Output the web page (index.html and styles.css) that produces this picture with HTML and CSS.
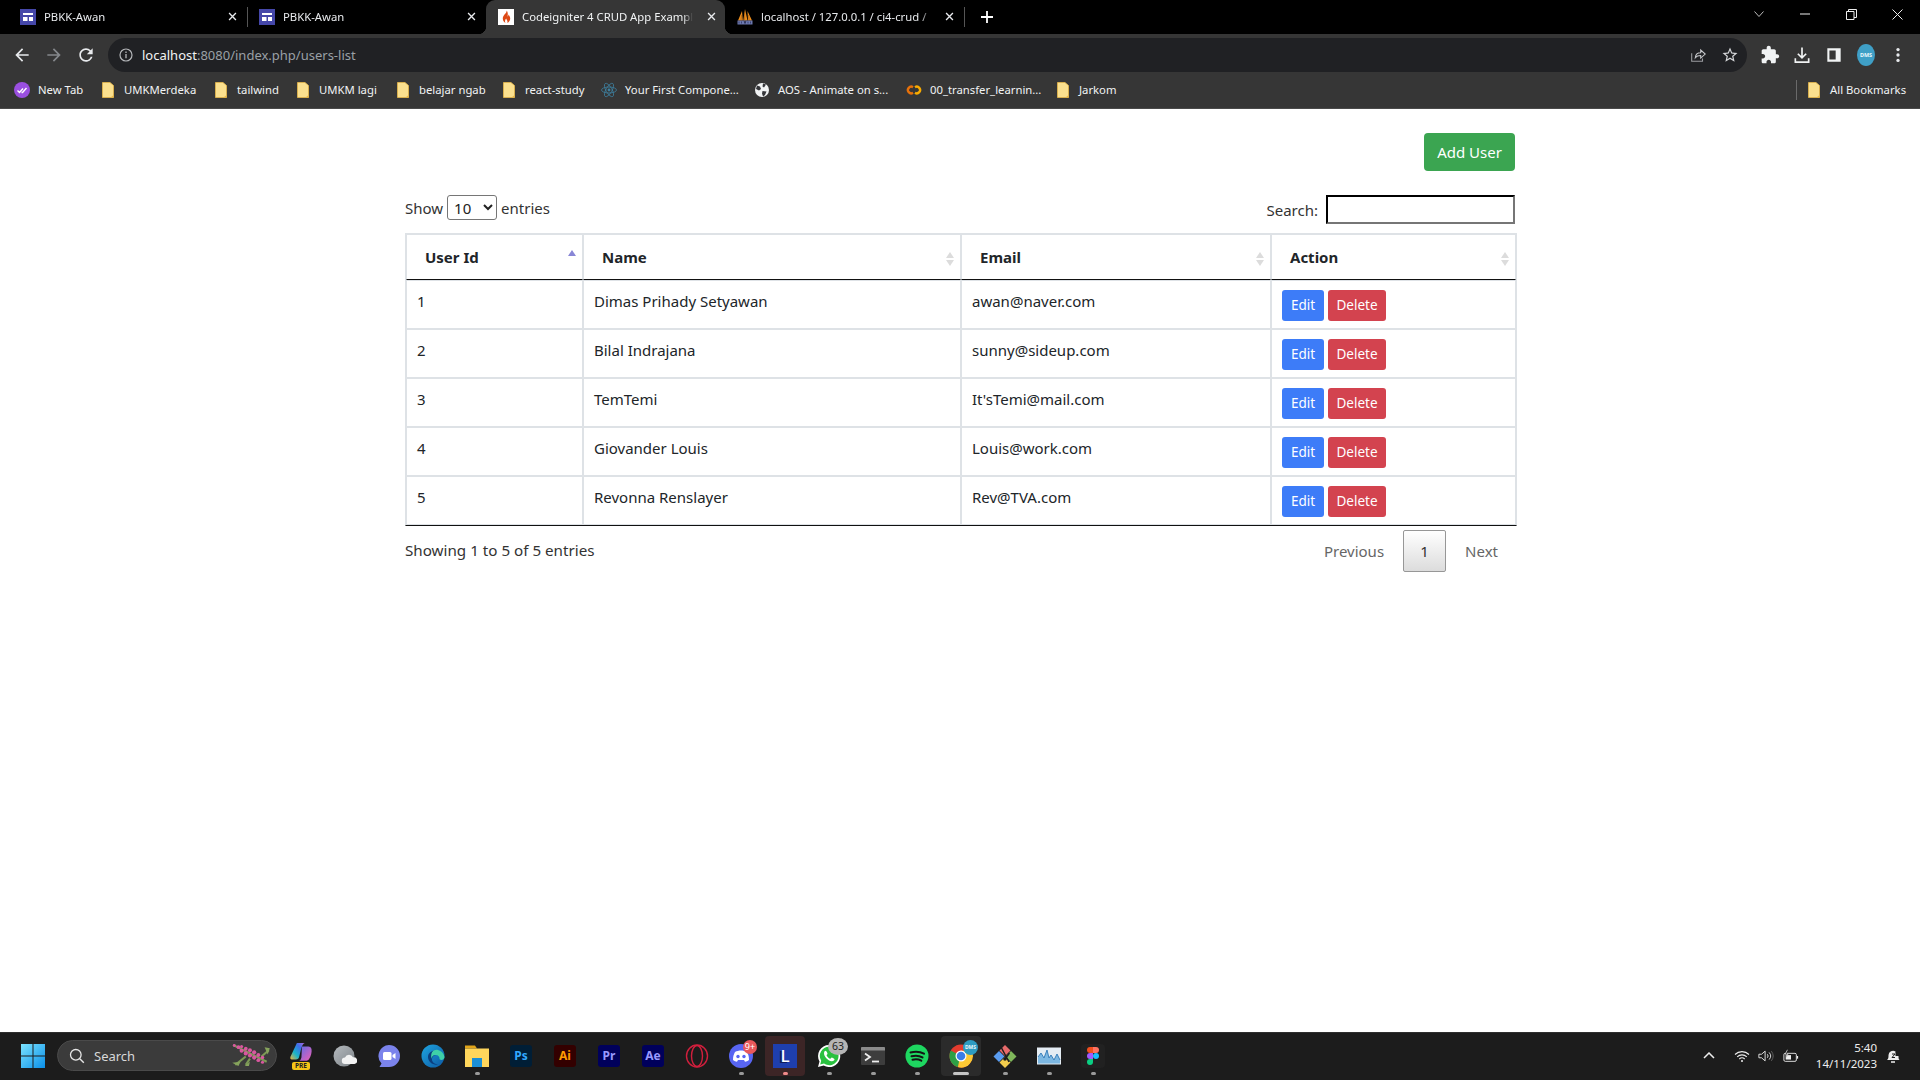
FILE: index.html
```html
<!DOCTYPE html>
<html lang="en">
<head>
<meta charset="UTF-8">
<meta name="viewport" content="width=device-width, initial-scale=1.0">
<title>Codeigniter 4 CRUD App Example</title>
<link rel="stylesheet" href="styles.css">
</head>
<body>

<svg class="defs" width="0" height="0" aria-hidden="true">
  <symbol id="i-close" viewBox="0 0 10 10"><path d="M1.2 1.2l7.6 7.6M8.8 1.2L1.2 8.8" fill="none" stroke="currentColor" stroke-width="1.5"/></symbol>
  <symbol id="i-folder" viewBox="0 0 12 16"><path d="M0.5 0.5h7.5l3.5 3v12H0.5z" fill="#fbe08e" stroke="#e9b949" stroke-width="0.8"/><path d="M8.5 15.5h3v-2.5z" fill="#e9b949"/></symbol>
  <symbol id="i-page" viewBox="0 0 16 16"><rect width="16" height="16" fill="#4547a9"/><path d="M3 4h10v2H3zM3 8h4.5v4H3zM9 8h4v4H9z" fill="#fff"/></symbol>
</svg>

<header class="browser">
  <div class="tabstrip">
    <div class="tab">
      <svg class="fav"><use href="#i-page"/></svg>
      <span class="tab-title">PBKK-Awan</span>
      <svg class="tab-x"><use href="#i-close"/></svg>
    </div>
    <div class="tab tab-sep">
      <svg class="fav"><use href="#i-page"/></svg>
      <span class="tab-title">PBKK-Awan</span>
      <svg class="tab-x"><use href="#i-close"/></svg>
    </div>
    <div class="tab tab-active">
      <svg class="fav" viewBox="0 0 16 16"><rect width="16" height="16" fill="#fff"/><path d="M8.6 1.5c.6 2.600-3.800 4.400-3.800 8 0 2 1.200 3.600 2.800 4.500-.9-1.400-.9-2.700.6-4.400.2 1.400 1.900 2.200 1.100 4.400 1.700-.8 2.900-2.400 2.900-4.400 0-1.900-1-3.100-1.800-4 .1 1-.3 1.700-.9 2C10 5.500 10 3 8.600 1.500z" fill="#dd4814"/></svg>
      <span class="tab-title">Codeigniter 4 CRUD App Exampl</span>
      <svg class="tab-x"><use href="#i-close"/></svg>
    </div>
    <div class="tab">
      <svg class="fav" viewBox="0 0 16 16"><path d="M1 11.500L5 2l.8 9.500zM6.300 11.500L8 0l2.500 11.500zM11 11.500L10.500 2 15 11.500z" fill="#ec8d1c"/><path d="M7.800 3L7.500 11M4.600 6l-.6 5M11.500 6l.6 5" stroke="#8a4f12" stroke-width="0.500"/><rect x="0.500" y="11.500" width="15" height="4" fill="#6c78af"/><path d="M2 12.500v2M4.500 12.500v2M7 12.500l1 2 1-2M11 12.500v2M13.500 12.500v2" stroke="#2e3560" stroke-width="0.800"/></svg>
      <span class="tab-title">localhost / 127.0.0.1 / ci4-crud /</span>
      <svg class="tab-x"><use href="#i-close"/></svg>
    </div>
    <span class="tab-end"></span>
    <svg class="tab-new" viewBox="0 0 12 12"><path d="M6 0v12M0 6h12" stroke="#fff" stroke-width="1.800"/></svg>
    <div class="win-btns">
      <span class="win-btn"><svg width="10" height="6" viewBox="0 0 10 6"><path d="M.5.5L5 5.500 9.500.5" fill="none" stroke="#bbb"/></svg></span>
      <span class="win-btn"><svg width="10" height="2" viewBox="0 0 10 2"><path d="M0 1h10" stroke="#eee"/></svg></span>
      <span class="win-btn"><svg width="11" height="11" viewBox="0 0 11 11"><path d="M.5 2.500h7.500v8H.5zM2.500 2.500V.5h8v8H8" fill="none" stroke="#eee"/></svg></span>
      <span class="win-btn"><svg width="11" height="11" viewBox="0 0 11 11"><path d="M.5.5l10 10M10.500.5l-10 10" stroke="#eee"/></svg></span>
    </div>
  </div>

  <div class="toolbar">
    <span class="tool"><svg viewBox="0 0 24 24"><path d="M20 11H7.800l5.600-5.600L12 4l-8 8 8 8 1.400-1.400L7.800 13H20z" fill="#e8eaed"/></svg></span>
    <span class="tool"><svg viewBox="0 0 24 24"><path d="M4 11h12.200l-5.600-5.600L12 4l8 8-8 8-1.400-1.400 5.600-5.600H4z" fill="#85888c"/></svg></span>
    <span class="tool"><svg viewBox="0 0 24 24"><path d="M17.650 6.350A7.958 7.958 0 0 0 12 4c-4.420 0-7.990 3.580-7.990 8s3.570 8 7.990 8c3.730 0 6.840-2.550 7.730-6h-2.080A5.990 5.990 0 0 1 12 18c-3.310 0-6-2.690-6-6s2.690-6 6-6c1.660 0 3.140.69 4.220 1.780L13 11h7V4l-2.350 2.350z" fill="#e8eaed"/></svg></span>
    <div class="omnibox">
      <svg class="omni-info" viewBox="0 0 14 14"><circle cx="7" cy="7" r="6" fill="none" stroke="#b5b7ba" stroke-width="1.200"/><path d="M7 6v4.200M7 3.500v1.400" stroke="#b5b7ba" stroke-width="1.300"/></svg>
      <span class="url"><b>localhost</b>:8080/index.php/users-list</span>
      <svg class="omni-act" viewBox="0 0 20 20"><path d="M3 8v9h12v-3" fill="none" stroke="#9a9ca0" stroke-width="1.200"/><path d="M7 13c.3-3.500 3-5.500 6-5.500V4.500l5 4.500-5 4.500v-3c-2.500 0-4.700.8-6 2.500z" fill="none" stroke="#c5c7ca" stroke-width="1.200"/></svg>
      <svg class="omni-act" viewBox="0 0 24 24"><path d="M22 9.240l-7.190-.62L12 2 9.190 8.630 2 9.240l5.460 4.730L5.820 21 12 17.270 18.180 21l-1.630-7.030L22 9.240zM12 15.400l-3.760 2.270 1-4.280-3.320-2.880 4.380-.38L12 6.100l1.710 4.040 4.380.38-3.320 2.880 1 4.280L12 15.400z" fill="#d5d7da"/></svg>
    </div>
    <span class="tool"><svg viewBox="0 0 24 24"><path d="M20.500 11H19V7c0-1.100-.9-2-2-2h-4V3.500C13 2.120 11.880 1 10.500 1S8 2.120 8 3.500V5H4c-1.100 0-1.990.9-1.990 2v3.800H3.500c1.490 0 2.700 1.210 2.700 2.700s-1.210 2.700-2.700 2.700H2V20c0 1.100.9 2 2 2h3.800v-1.500c0-1.490 1.210-2.700 2.700-2.700 1.490 0 2.700 1.210 2.700 2.700V22H17c1.100 0 2-.9 2-2v-4h1.500c1.380 0 2.500-1.120 2.500-2.500S21.880 11 20.500 11z" fill="#f1f3f4"/></svg></span>
    <span class="tool"><svg viewBox="0 0 24 24"><path d="M12 3v12M7 10.500l5 5 5-5M4 16v4.500h16V16" fill="none" stroke="#f1f3f4" stroke-width="2"/></svg></span>
    <span class="tool"><svg viewBox="0 0 24 24"><path d="M4 4h16v16H4zM6.500 6.500v11H14v-11z" fill="#f1f3f4" fill-rule="evenodd"/></svg></span>
    <span class="tool"><span class="avatar">DMS</span></span>
    <span class="tool"><svg viewBox="0 0 24 24"><circle cx="12" cy="5.500" r="2" fill="#e8eaed"/><circle cx="12" cy="12" r="2" fill="#e8eaed"/><circle cx="12" cy="18.500" r="2" fill="#e8eaed"/></svg></span>
  </div>

  <nav class="bookmarks">
    <a class="bm bm-newtab">
      <svg class="bm-ico" viewBox="0 0 16 16"><circle cx="8" cy="8" r="8" fill="#9a4fe0"/><path d="M3.500 8.500l2 2 3.500-4M7.500 10.500l1 0 4-4.500" fill="none" stroke="#fff" stroke-width="1.400"/></svg>New Tab</a>
    <a class="bm bm-a"><svg class="bm-folder"><use href="#i-folder"/></svg>UMKMerdeka</a>
    <a class="bm bm-b"><svg class="bm-folder"><use href="#i-folder"/></svg>tailwind</a>
    <a class="bm bm-c"><svg class="bm-folder"><use href="#i-folder"/></svg>UMKM lagi</a>
    <a class="bm bm-d"><svg class="bm-folder"><use href="#i-folder"/></svg>belajar ngab</a>
    <a class="bm bm-e"><svg class="bm-folder"><use href="#i-folder"/></svg>react-study</a>
    <a class="bm bm-f">
      <svg class="bm-ico" viewBox="0 0 16 16"><g fill="none" stroke="#3d7f9e" stroke-width="0.800"><ellipse cx="8" cy="8" rx="7.500" ry="3"/><ellipse cx="8" cy="8" rx="7.500" ry="3" transform="rotate(60 8 8)"/><ellipse cx="8" cy="8" rx="7.500" ry="3" transform="rotate(120 8 8)"/></g><circle cx="8" cy="8" r="1.400" fill="#3d7f9e"/></svg>Your First Compone...</a>
    <a class="bm bm-g">
      <svg class="bm-ico" viewBox="0 0 16 16"><circle cx="8" cy="8" r="7" fill="#f1f3f4"/><path d="M3 3.500l3 1 1 2.500-2 1.500L2 7zM9 1.500l3 1-2 3-1.500-1zM8.500 9l4 .5L11 13l-2 1.500-1-3z" fill="#35363a"/></svg>AOS - Animate on s...</a>
    <a class="bm bm-h">
      <svg class="bm-ico" viewBox="0 0 16 16"><g fill="none" stroke-width="2.400"><path d="M7 5.200a3.300 3.300 0 1 0 0 5.600" stroke="#e8710a"/><path d="M9 5.200a3.300 3.300 0 1 1 0 5.600" stroke="#f9ab00"/></g></svg>00_transfer_learnin...</a>
    <a class="bm bm-i"><svg class="bm-folder"><use href="#i-folder"/></svg>Jarkom</a>
    <span class="bm-sep"></span>
    <a class="bm bm-all"><svg class="bm-folder"><use href="#i-folder"/></svg>All Bookmarks</a>
  </nav>
</header>

<main class="page">
  <div class="container">
    <div class="add-row">
      <a class="btn btn-success">Add User</a>
    </div>

    <div class="dt-top">
      <label class="dt-length">Show
        <select class="dt-select"><option>10</option><option>25</option><option>50</option><option>100</option></select>
        entries</label>
      <label class="dt-search">Search: <input type="search" class="dt-input"></label>
    </div>

    <table class="users">
      <colgroup>
        <col class="col-id"><col class="col-name"><col class="col-email"><col class="col-action">
      </colgroup>
      <thead>
        <tr>
          <th class="sort sort-asc">User Id</th>
          <th class="sort">Name</th>
          <th class="sort">Email</th>
          <th class="sort">Action</th>
        </tr>
      </thead>
      <tbody>
        <tr>
          <td>1</td><td>Dimas Prihady Setyawan</td><td>awan@naver.com</td>
          <td><div class="row-btns"><a class="btn-sm btn-primary">Edit</a><a class="btn-sm btn-danger">Delete</a></div></td>
        </tr>
        <tr>
          <td>2</td><td>Bilal Indrajana</td><td>sunny@sideup.com</td>
          <td><div class="row-btns"><a class="btn-sm btn-primary">Edit</a><a class="btn-sm btn-danger">Delete</a></div></td>
        </tr>
        <tr>
          <td>3</td><td>TemTemi</td><td>It'sTemi@mail.com</td>
          <td><div class="row-btns"><a class="btn-sm btn-primary">Edit</a><a class="btn-sm btn-danger">Delete</a></div></td>
        </tr>
        <tr>
          <td>4</td><td>Giovander Louis</td><td>Louis@work.com</td>
          <td><div class="row-btns"><a class="btn-sm btn-primary">Edit</a><a class="btn-sm btn-danger">Delete</a></div></td>
        </tr>
        <tr>
          <td>5</td><td>Revonna Renslayer</td><td>Rev@TVA.com</td>
          <td><div class="row-btns"><a class="btn-sm btn-primary">Edit</a><a class="btn-sm btn-danger">Delete</a></div></td>
        </tr>
      </tbody>
    </table>

    <div class="dt-bottom">
      <div class="dt-info">Showing 1 to 5 of 5 entries</div>
      <div class="dt-paging">
        <a class="pg">Previous</a>
        <a class="pg pg-current">1</a>
        <a class="pg">Next</a>
      </div>
    </div>
  </div>
</main>

<footer class="taskbar">
  <svg class="start" viewBox="0 0 24 24"><defs><linearGradient id="win" x1="0" y1="0" x2="1" y2="1"><stop offset="0" stop-color="#7be3ff"/><stop offset="1" stop-color="#0a8fe8"/></linearGradient></defs><path d="M0 0h11.500v11.500H0zM12.500 0H24v11.500H12.500zM0 12.500h11.500V24H0zM12.500 12.500H24V24H12.500z" fill="url(#win)"/></svg>
  <div class="tb-search">
    <svg class="tb-search-ico" viewBox="0 0 16 16"><circle cx="6.800" cy="6.800" r="5.300" fill="none" stroke="#e6e6e6" stroke-width="1.300"/><path d="M10.800 10.800l4 4" stroke="#e6e6e6" stroke-width="1.400"/></svg>
    <span>Search</span>
    <svg class="tb-flower" viewBox="0 0 38 22">
      <path d="M2 1l32 16M4 20l10-8M36 6l-7 6M14 20l4-6" stroke="#7c9a55" stroke-width="2"/>
      <path d="M1 18l6 3 2-4zM32 3l5 1-2 6zM13 21l4 0 1-4z" fill="#86a35c"/>
      <g fill="#d9579f"><circle cx="3" cy="1.500" r="1.400"/><circle cx="7" cy="3" r="1.800"/><circle cx="10" cy="2.500" r="1.500"/><circle cx="10" cy="6.500" r="1.900"/><circle cx="14" cy="4.500" r="1.800"/><circle cx="14" cy="9" r="2"/><circle cx="18" cy="6" r="1.900"/><circle cx="18" cy="11" r="2"/><circle cx="22" cy="8" r="2"/><circle cx="22" cy="13" r="2"/><circle cx="26" cy="10.500" r="1.900"/><circle cx="26" cy="15.500" r="1.800"/><circle cx="30" cy="13" r="1.700"/><circle cx="30" cy="17.500" r="1.500"/></g>
    </svg>
  </div>

  <div class="tb-apps">
    <span class="tb-app">
      <svg class="tb-ico tb-copilot" viewBox="0 0 24 24"><defs><linearGradient id="cop" x1="0" y1="1" x2="1" y2="0"><stop offset="0" stop-color="#f2b33d"/><stop offset="0.350" stop-color="#18b5c9"/><stop offset="0.700" stop-color="#3d6fe8"/><stop offset="1" stop-color="#b565e0"/></linearGradient><linearGradient id="cop2" x1="0" y1="0" x2="1" y2="1"><stop offset="0" stop-color="#5c6ce8"/><stop offset="1" stop-color="#ee5fb5"/></linearGradient></defs><path d="M7.500 1h8.500c-2 1-3 3-4 7l-2 8c-.5 2-1.500 3-3.500 3H2C.5 19 0 17.500.5 16z" fill="url(#cop)"/><path d="M13 5h7c2 0 3 1 3.500 3 .5 3-.5 8-3 11-1 1-2 1.500-3.500 1.500H9.500c2 0 2.500-2 3-4z" fill="url(#cop2)"/></svg>
      <span class="pre">PRE</span>
    </span>
    <span class="tb-app"><svg class="tb-ico" viewBox="0 0 24 24"><defs><linearGradient id="cld" x1="0" y1="0" x2="1" y2="1"><stop offset="0" stop-color="#b5babe"/><stop offset="1" stop-color="#7e8489"/></linearGradient></defs><circle cx="11" cy="12" r="10.500" fill="url(#cld)"/><path d="M12 20a3.200 3.200 0 0 1 0-6.400 4.300 4.300 0 0 1 8-.3 3.300 3.300 0 0 1 1.500 6.700z" fill="#f2f2f2"/></svg></span>
    <span class="tb-app"><svg class="tb-ico" viewBox="0 0 24 24"><path d="M12 1a11 11 0 0 1 0 22H2.500l2-3.500A11 11 0 0 1 12 1z" fill="#7b83eb"/><rect x="6" y="8" width="8.500" height="8" rx="1.500" fill="#fff"/><path d="M15.500 11l3-2v6l-3-2z" fill="#fff"/></svg></span>
    <span class="tb-app"><svg class="tb-ico" viewBox="0 0 24 24"><defs><linearGradient id="edg" x1="0" y1="0" x2="1" y2="1"><stop offset="0" stop-color="#1fa5e0"/><stop offset="1" stop-color="#0c59a4"/></linearGradient></defs><circle cx="12" cy="12" r="11.500" fill="url(#edg)"/><path d="M23.500 13.500C23 9 19 6.500 14.500 6.500 10 6.500 7 9.500 7 13c0 5 5 8.500 10 7.500-4-.5-6.500-3-6-6 .5-2.500 3-4 5.500-3.500 2 .5 3 2 2.500 3.500z" fill="#0b3f7f"/><path d="M23.500 13c.2 1.500-1.500 3-3 3-1.500 0-2-.7-2-1.200 0-2-1-3.800-4-3.800-2.500 0-4 1.800-4 4C9 8 13 5 17 6c3.500.8 6 3.500 6.500 7z" fill="#3fd0a8"/></svg></span>
    <span class="tb-app tb-run"><svg class="tb-ico" viewBox="0 0 24 24"><path d="M0 1.500h10l2 3H0z" fill="#e2a51a"/><path d="M0 4.500h24V23H0z" fill="#ffd65c"/><rect x="7" y="14" width="10" height="9" fill="#1b8fd6"/></svg></span>
    <span class="tb-app"><span class="adobe adobe-ps">Ps</span></span>
    <span class="tb-app"><span class="adobe adobe-ai">Ai</span></span>
    <span class="tb-app"><span class="adobe adobe-pr">Pr</span></span>
    <span class="tb-app"><span class="adobe adobe-ae">Ae</span></span>
    <span class="tb-app"><svg class="tb-ico" viewBox="0 0 24 24"><ellipse cx="12" cy="12" rx="10.500" ry="11" fill="none" stroke="#d11f3d" stroke-width="1.400"/><ellipse cx="12" cy="12" rx="5.500" ry="10.500" fill="none" stroke="#d11f3d" stroke-width="1.400"/></svg></span>
    <span class="tb-app tb-run">
      <svg class="tb-ico" viewBox="0 0 24 24"><circle cx="12" cy="12" r="12" fill="#5865f2"/><path d="M6 8c3.500-2 8.500-2 12 0 1.500 2.500 2 5 2 8-1.500 1-2.500 1.500-4 1.800l-1-1.800h-6l-1 1.800C6.500 17.500 5.500 17 4 16c0-3 .5-5.500 2-8z" fill="#fff"/><circle cx="9" cy="12.500" r="1.700" fill="#5865f2"/><circle cx="15" cy="12.500" r="1.700" fill="#5865f2"/></svg>
      <span class="badge badge-red">9+</span>
    </span>
    <span class="tb-app tb-run tb-flash"><span class="app-l">L</span></span>
    <span class="tb-app tb-run">
      <svg class="tb-ico" viewBox="0 0 24 24"><path d="M12 1a11 11 0 0 0-9.500 16.500L1 23l5.700-1.500A11 11 0 1 0 12 1z" fill="#fff"/><path d="M12 2.800a9.200 9.200 0 0 0-7.800 14l-1 3.700 3.800-1A9.200 9.200 0 1 0 12 2.800z" fill="#29c13f"/><path d="M8.500 6.800c-.5 0-1.500.8-1.500 2.500 0 3 3.800 7.500 7.500 8 2 .2 3-1 3-2 0-.5-2.200-1.800-2.700-1.800-.5 0-1 1.200-1.500 1.200-1 0-3.500-2.200-3.800-3.500 0-.5 1-1 1-1.500 0-.5-1-3-2-2.900z" fill="#fff"/></svg>
      <span class="badge badge-grey">63</span>
    </span>
    <span class="tb-app tb-run"><svg class="tb-ico" viewBox="0 0 24 24"><rect y="3" width="24" height="18" rx="1" fill="#3d3d3d"/><path d="M0 4a1 1 0 0 1 1-1h22a1 1 0 0 1 1 1v2.500H0z" fill="#8b8b8b"/><path d="M4 9.500l5 3.500-5 3.500" fill="none" stroke="#eee" stroke-width="1.800"/><path d="M11 17.500h7" stroke="#eee" stroke-width="1.800"/></svg></span>
    <span class="tb-app tb-run"><svg class="tb-ico" viewBox="0 0 24 24"><circle cx="12" cy="12" r="11.500" fill="#1ed760"/><path d="M5.500 8.500c4.500-1.300 9.500-1 13.500 1.200M6.500 12.300c3.700-1 7.800-.7 11 1.100M7.500 15.800c3-.8 6-.6 8.800.9" fill="none" stroke="#141414" stroke-width="2" stroke-linecap="round"/></svg></span>
    <span class="tb-app tb-run tb-open">
      <svg class="tb-ico" viewBox="0 0 24 24"><circle cx="12" cy="12" r="11.500" fill="#e33b2e"/><path d="M12 12L1.800 6.500A11.500 11.500 0 0 0 9 23.100z" fill="#2d9f46"/><path d="M12 6.700h10.400A11.500 11.500 0 0 1 9 23.100z" fill="#fcc934"/><circle cx="12" cy="12" r="5.500" fill="#fff"/><circle cx="12" cy="12" r="4.300" fill="#3b7de8"/></svg>
      <span class="badge badge-dms">DMS</span>
    </span>
    <span class="tb-app tb-run"><svg class="tb-ico" viewBox="0 0 24 24"><path d="M12 1l5.500 5.500L12 12 6.500 6.500z" fill="#e76a6a"/><path d="M6 7l5.500 5.500L6 18 .5 12.500z" fill="#5a9cf0"/><path d="M18 7l5.500 5.500L18 18l-5.500-5.500z" fill="#7fb65a"/><path d="M12 13l5.500 5.500L12 24l-5.500-5.500z" fill="#f3cd4d"/><path d="M8 3l8 15M16.500 9L12 15" stroke="#1c1c1c" stroke-width="1.500"/><circle cx="12" cy="15" r="1.800" fill="#1c1c1c"/></svg></span>
    <span class="tb-app tb-run"><svg class="tb-ico" viewBox="0 0 24 24"><rect y="3.500" width="24" height="17" fill="#e4ecf3"/><path d="M1 19.500V13l3-4 3 5 3-8 2 8 2-3 3 5 3-6 3 6v3.500z" fill="#7db8e2"/><path d="M1 13l3-4 3 5 3-8 2 8 2-3 3 5 3-6 3 6" fill="none" stroke="#2f77b5" stroke-width="0.900"/></svg></span>
    <span class="tb-app tb-run"><span class="figma-back"><svg class="figma" viewBox="0 0 12 18"><path d="M3 0h3v6H3a3 3 0 0 1 0-6z" fill="#f24e1e"/><path d="M6 0h3a3 3 0 0 1 0 6H6z" fill="#ff7262"/><path d="M3 6h3v6H3a3 3 0 0 1 0-6z" fill="#a259ff"/><circle cx="9" cy="9" r="3" fill="#1abcfe"/><path d="M3 12h3v3a3 3 0 1 1-3-3z" fill="#0acf83"/></svg></span></span>
  </div>

  <div class="tray">
    <svg class="tray-chev" viewBox="0 0 12 7"><path d="M1 6l5-5 5 5" fill="none" stroke="#eee" stroke-width="1.500"/></svg>
    <svg class="tray-wifi" viewBox="0 0 16 12"><path d="M1 4.500a10 10 0 0 1 14 0M3.200 6.800a7 7 0 0 1 9.600 0M5.300 9a4 4 0 0 1 5.400 0" fill="none" stroke="#eee" stroke-width="1.100"/><circle cx="8" cy="11" r="1" fill="#eee"/></svg>
    <svg class="tray-vol" viewBox="0 0 18 14"><path d="M1 5h3l4-3.500v11L4 9H1z" fill="none" stroke="#eee"/><path d="M10.500 5a3 3 0 0 1 0 4M12.500 3a6 6 0 0 1 0 8" fill="none" stroke="#eee"/><path d="M15 1.500a9 9 0 0 1 0 11" fill="none" stroke="#666"/></svg>
    <svg class="tray-bat" viewBox="0 0 18 14"><rect x="1" y="4" width="14" height="9" rx="1.500" fill="none" stroke="#eee"/><rect x="3" y="6" width="6" height="5" fill="#eee"/><path d="M15.500 7h1.500v3h-1.500z" fill="#eee"/><path d="M5 0L2.500 5h3L4 9" fill="#1c1c1c" stroke="#eee" stroke-width="0.800"/></svg>
    <div class="clock"><span>5:40</span><span>14/11/2023</span></div>
    <svg class="tray-bell" viewBox="0 0 16 16"><path d="M2 12c1.500-1 1.500-3 1.500-5a4.500 4.500 0 0 1 7-3.500V8h3c0 2 0 3 1 4z" fill="#eee"/><path d="M6 14h4" stroke="#eee" stroke-width="1.500"/><path d="M7 6h3L7 9.500h3M11 1h3.500L11 4.500h3.500" fill="none" stroke="#1c1c1c" stroke-width="1"/></svg>
  </div>
</footer>

</body>
</html>
```

FILE: styles.css
```css
* {
  box-sizing: border-box;
}
html, body {
  height: 100%;
}
body {
  margin: 0;
  display: flex;
  flex-direction: column;
  overflow: hidden;
  font-family: "Noto Sans", "Open Sans", sans-serif;
  background: #fff;
  color: #212529;
}
a {
  text-decoration: none;
}
.defs {
  display: none;
}

/* browser chrome */
.browser {
  color: #e8eaed;
  font-size: 11.3px;
}
.tabstrip {
  height: 34px;
  background: #000;
  display: flex;
  align-items: center;
  padding-left: 8px;
}
.tab {
  position: relative;
  width: 239px;
  height: 34px;
  padding: 0 10px 1px 12px;
  display: flex;
  align-items: center;
  gap: 8px;
  color: #e8eaed;
}
.tab-sep::before,
.tab-end {
  content: "";
  width: 1px;
  height: 20px;
  background: #555;
  flex: none;
}
.tab-sep::before {
  position: absolute;
  left: 0;
  top: 7px;
}
.tab-active {
  background: #363636;
  border-radius: 9px 9px 0 0;
  color: #f1f3f4;
}
.tab-active::before,
.tab-active::after {
  content: "";
  position: absolute;
  bottom: 0;
  width: 8px;
  height: 8px;
}
.tab-active::before {
  left: -8px;
  background: radial-gradient(circle at 0 0, #000 8px, #363636 8.5px);
}
.tab-active::after {
  right: -8px;
  background: radial-gradient(circle at 100% 0, #000 8px, #363636 8.5px);
}
.fav {
  width: 16px;
  height: 16px;
  flex: none;
}
.tab-title {
  flex: 1;
  white-space: nowrap;
  -webkit-mask-image: linear-gradient(to left, transparent 0, #000 10px);
  mask-image: linear-gradient(to left, transparent 0, #000 10px);
}
.tab-x {
  width: 9px;
  height: 9px;
  flex: none;
  color: #e8eaed;
  margin-left: 6px;
}
.tab-new {
  width: 12px;
  height: 12px;
  margin-left: 16px;
}
.win-btns {
  margin-left: auto;
  display: flex;
}
.win-btn {
  width: 46px;
  height: 28px;
  margin-bottom: 6px;
  display: flex;
  align-items: center;
  justify-content: center;
}

.toolbar {
  height: 38px;
  background: #363636;
  display: flex;
  align-items: flex-end;
  padding: 0 6px;
}
.tool {
  width: 32px;
  height: 34px;
  display: flex;
  align-items: center;
  justify-content: center;
  flex: none;
}
.tool svg {
  width: 20px;
  height: 20px;
}
.avatar {
  width: 18px;
  height: 22px;
  border-radius: 50%;
  background: #3f9fc6;
  color: #e8f6fb;
  font-size: 5.500px;
  font-weight: 700;
  display: flex;
  align-items: center;
  justify-content: center;
}
.omnibox {
  flex: 1;
  height: 34px;
  margin: 0 7px 0 6px;
  padding: 0 8px 0 11px;
  border-radius: 17px;
  background: #202124;
  display: flex;
  align-items: center;
}
.omni-info {
  width: 14px;
  height: 14px;
  margin-right: 9px;
}
.url {
  flex: 1;
  font-size: 13px;
  color: #9aa0a6;
}
.url b {
  font-weight: 400;
  color: #f1f3f4;
}
.omni-act {
  width: 18px;
  height: 18px;
  margin-left: 14px;
}

.bookmarks {
  height: 37px;
  background: #363636;
  border-bottom: 1px solid #4a4a4a;
  display: flex;
  align-items: center;
  padding: 0 0 1px 14px;
  white-space: nowrap;
}
.bm {
  display: flex;
  align-items: center;
  color: #f1f3f4;
  flex: none;
}
.bm-ico {
  width: 16px;
  height: 16px;
  margin-right: 8px;
}
.bm-folder {
  width: 12px;
  height: 16px;
  margin-right: 10px;
}
/* item widths, so the row keeps the same rhythm as the bar in Chrome */
.bm-newtab { width: 88px; }
.bm-a { width: 113px; }
.bm-b { width: 82px; }
.bm-c { width: 100px; }
.bm-d { width: 106px; }
.bm-e { width: 98px; }
.bm-f { width: 153px; }
.bm-g { width: 152px; }
.bm-h { width: 151px; }
.bm-i { width: 60px; }
.bm-sep {
  width: 1px;
  height: 20px;
  background: #6a6a6a;
  margin-left: auto;
  margin-right: 11px;
}
.bm-all {
  width: 108px;
  margin-right: 4px;
}

/* page */
.page {
  flex: 1;
  min-height: 0;
}
.container {
  width: 1140px;
  margin: 0 auto;
  padding: 24px 15px 0;
}
.add-row {
  display: flex;
  justify-content: flex-end;
  margin-bottom: 24px;
}
.btn {
  display: inline-block;
  height: 38px;
  width: 91px;
  line-height: 38px;
  font-size: 15px;
  text-align: center;
  border-radius: 4px;
  color: #fff;
}
.btn-success {
  background: #3ba551;
}
.dt-top {
  height: 38px;
  display: flex;
  justify-content: space-between;
  align-items: flex-start;
  font-size: 15px;
  color: #333;
}
.dt-length {
  display: flex;
  align-items: center;
  gap: 4px;
  height: 25px;
}
.dt-select {
  width: 50px;
  height: 25px;
  font-family: inherit;
  font-size: 15px;
  background: #fff;
  border: 1px solid #767676;
  border-radius: 3px;
  color: #222;
  padding: 0 0 0 2px;
}
.dt-search {
  display: flex;
  align-items: center;
  gap: 8px;
}
.dt-input {
  width: 189px;
  height: 29px;
  border: 2px inset #767676;
  border-color: #222 #767676 #767676 #222;
  background: #fff;
  padding: 1px 2px;
  outline: none;
}

.users {
  width: 1110px;
  table-layout: fixed;
  border-collapse: separate;
  border-spacing: 0;
  border: 1px solid #dee2e6;
  border-bottom: 1px solid #111;
  font-size: 15px;
  line-height: 24px;
}
.col-id { width: 177px; }
.col-name { width: 378px; }
.col-email { width: 310px; }
.col-action { width: 245px; }
.users th {
  position: relative;
  text-align: left;
  padding: 10px 18px;
  border: 1px solid #dee2e6;
  border-bottom: 1px solid #111;
  font-weight: 700;
  color: #212529;
}
.users td {
  padding: 8px 10px;
  border: 1px solid #dee2e6;
  vertical-align: top;
  color: #212529;
}
.sort::before,
.sort::after {
  content: "";
  position: absolute;
  right: 6px;
  width: 0;
  height: 0;
  border-left: 4px solid transparent;
  border-right: 4px solid transparent;
}
.sort::before {
  top: 17px;
  border-bottom: 6px solid #dcdcdc;
}
.sort::after {
  top: 25px;
  border-top: 6px solid #dcdcdc;
}
.sort-asc::before {
  top: 15px;
  border-left-width: 4.500px;
  border-right-width: 4.500px;
  border-bottom-color: #8886d6;
}
.sort-asc::after {
  display: none;
}
.row-btns {
  display: flex;
  gap: 4px;
  padding-top: 1px;
  margin-bottom: -1px;
}
.btn-sm {
  height: 31px;
  line-height: 31px;
  font-size: 13.500px;
  text-align: center;
  border-radius: 3px;
  color: #fff;
}
.btn-primary {
  width: 42px;
  background: #3d7cf8;
}
.btn-danger {
  width: 58px;
  background: #d3434f;
}

.dt-bottom {
  display: flex;
  justify-content: space-between;
  font-size: 15px;
  color: #333;
}
.dt-info {
  padding-top: 14px;
  font-size: 15.200px;
}
.dt-paging {
  display: flex;
  padding-top: 4px;
}
.pg {
  height: 42px;
  padding: 0 16px;
  margin-left: 2px;
  line-height: 40px;
  border: 1px solid transparent;
  border-radius: 2px;
  color: #666;
}
.pg-current {
  width: 43px;
  padding: 0;
  text-align: center;
  color: #333;
  border-color: #979797;
  background: linear-gradient(to bottom, #fff 0%, #dcdcdc 100%);
}

/* taskbar */
.taskbar {
  height: 48px;
  background: #1c1c1c;
  border-top: 1px solid #2e2e2e;
  display: flex;
  align-items: center;
  padding: 0 0 2px 21px;
  color: #eee;
}
.start {
  width: 24px;
  height: 24px;
  flex: none;
}
.tb-search {
  width: 220px;
  height: 31px;
  margin-left: 12px;
  padding: 0 5px 0 11px;
  border-radius: 16px;
  background: #3b3b3b;
  border: 1px solid #4a4a4a;
  display: flex;
  align-items: center;
  gap: 9px;
  font-size: 13px;
  color: #d8d8d8;
}
.tb-search-ico {
  width: 16px;
  height: 16px;
}
.tb-flower {
  width: 40px;
  height: 23px;
  margin-left: auto;
}
.tb-apps {
  display: flex;
  margin-left: 2px;
}
.tb-app {
  position: relative;
  width: 44px;
  height: 40px;
  display: flex;
  align-items: center;
  justify-content: center;
}
.tb-ico {
  width: 24px;
  height: 24px;
}
.tb-copilot {
  width: 22px;
  height: 22px;
  margin-top: -5px;
}
.tb-run::after {
  content: "";
  position: absolute;
  left: 50%;
  bottom: 1px;
  width: 5px;
  height: 3px;
  margin-left: -2.500px;
  border-radius: 2px;
  background: #9a9a9a;
}
.tb-flash {
  width: 40px;
  margin: 0 2px;
  background: #3c2526;
  border-radius: 4px;
}
.tb-flash::after {
  background: #f08a8a;
}
.tb-open {
  width: 40px;
  margin: 0 2px;
  background: #2b2b2b;
  border-radius: 4px;
}
.tb-open::after {
  width: 16px;
  margin-left: -8px;
  background: #c5c5c5;
}
.pre {
  position: absolute;
  left: 13px;
  bottom: 6px;
  width: 18px;
  height: 8px;
  border-radius: 2px;
  background: #f5c518;
  color: #222;
  font-size: 6.500px;
  font-weight: 700;
  line-height: 8px;
  text-align: center;
}
.adobe {
  width: 22px;
  height: 22px;
  border-radius: 3px;
  font-size: 12px;
  font-weight: 700;
  line-height: 22px;
  text-align: center;
}
.adobe-ps { background: #001e36; color: #31a8ff; }
.adobe-ai { background: #330000; color: #ff9a00; }
.adobe-pr { background: #00005b; color: #9999ff; }
.adobe-ae { background: #00005b; color: #9999ff; }
.app-l {
  width: 24px;
  height: 24px;
  background: #1e3fae;
  color: #fff;
  font-size: 17px;
  font-weight: 500;
  line-height: 24px;
  text-align: center;
  text-shadow: -2px 1px 0 #0d1d5e;
}
.figma-back {
  width: 24px;
  height: 24px;
  border-radius: 4px;
  background: #212121;
  display: flex;
  align-items: center;
  justify-content: center;
}
.figma {
  width: 12px;
  height: 18px;
}
.badge {
  position: absolute;
  border-radius: 50%;
  text-align: center;
  font-size: 9px;
}
.badge-red {
  top: 4px;
  left: 24px;
  width: 14px;
  height: 14px;
  line-height: 14px;
  background: #e9585a;
  color: #fff;
}
.badge-grey {
  top: 2px;
  left: 21px;
  width: 20px;
  height: 17px;
  line-height: 17px;
  font-size: 10.500px;
  background: #b5b5b5;
  color: #222;
}
.badge-dms {
  top: 4px;
  left: 22px;
  width: 15px;
  height: 15px;
  line-height: 15px;
  background: #2d9bc1;
  color: #e8f6fb;
  font-size: 5px;
  font-weight: 700;
}
.tray {
  margin-left: auto;
  display: flex;
  align-items: center;
}
.tray-chev {
  width: 12px;
  height: 7px;
  margin-right: 19px;
}
.tray-wifi {
  width: 16px;
  height: 12px;
  margin-right: 8px;
}
.tray-vol {
  width: 16px;
  height: 14px;
  margin-right: 9px;
}
.tray-bat {
  width: 16px;
  height: 14px;
}
.clock {
  width: 78px;
  margin-left: 0;
  display: flex;
  flex-direction: column;
  align-items: flex-end;
  font-size: 11.500px;
  line-height: 16px;
}
.tray-bell {
  width: 16px;
  height: 16px;
  margin: 0 19px 0 8px;
}
```
